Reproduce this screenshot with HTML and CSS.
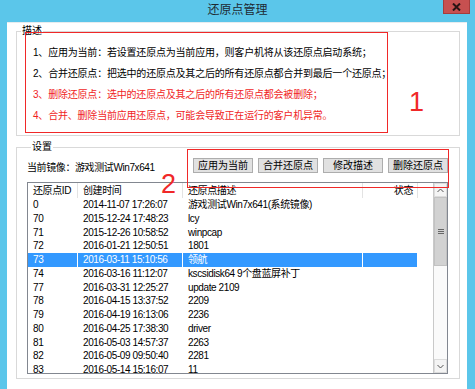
FILE: index.html
```html
<!DOCTYPE html>
<html lang="zh-CN">
<head>
    <meta charset="UTF-8">
    <meta name="viewport" content="width=device-width, initial-scale=1.0">
    <title>还原点管理</title>
    <link rel="stylesheet" href="styles.css">
</head>
<body>
    <div class="window">
        <div class="titlebar">
            还原点管理
            <span class="close">
                <svg width="9" height="8" viewBox="0 0 9 8"><path d="M1 0.5 L8 7.5 M8 0.5 L1 7.5" stroke="#2a1414" stroke-width="2"/></svg>
            </span>
        </div>
        <div class="client">
            <fieldset class="group">
                <legend>描述</legend>
                <div class="desc">
                    <p>1、应用为当前：若设置还原点为当前应用，则客户机将从该还原点启动系统；</p>
                    <p>2、合并还原点：把选中的还原点及其之后的所有还原点都合并到最后一个还原点；</p>
                    <p class="warn">3、删除还原点：选中的还原点及其之后的所有还原点都会被删除；</p>
                    <p class="warn">4、合并、删除当前应用还原点，可能会导致正在运行的客户机异常。</p>
                </div>
            </fieldset>
            <fieldset class="group settings">
                <legend>设置</legend>
                <div class="toolbar">
                    <span class="current">当前镜像：游戏测试Win7x641</span>
                    <div class="buttons">
                        <button>应用为当前</button>
                        <button>合并还原点</button>
                        <button>修改描述</button>
                        <button>删除还原点</button>
                    </div>
                </div>
                <div class="list">
                    <div class="rows">
                        <div class="row head">
                            <span>还原点ID</span><span>创建时间</span><span>还原点描述</span><span class="right">状态</span>
                        </div>
                        <div class="row"><span>0</span><span>2014-11-07 17:26:07</span><span>游戏测试Win7x641(系统镜像)</span><span></span></div>
                        <div class="row"><span>70</span><span>2015-12-24 17:48:23</span><span>lcy</span><span></span></div>
                        <div class="row"><span>71</span><span>2015-12-26 10:58:52</span><span>winpcap</span><span></span></div>
                        <div class="row"><span>72</span><span>2016-01-21 12:50:51</span><span>1801</span><span></span></div>
                        <div class="row sel"><span>73</span><span>2016-03-11 15:10:56</span><span>领航</span><span></span></div>
                        <div class="row"><span>74</span><span>2016-03-16 11:12:07</span><span>kscsidisk64 9个盘蓝屏补丁</span><span></span></div>
                        <div class="row"><span>77</span><span>2016-03-31 12:25:27</span><span>update 2109</span><span></span></div>
                        <div class="row"><span>78</span><span>2016-04-15 13:37:52</span><span>2209</span><span></span></div>
                        <div class="row"><span>79</span><span>2016-04-19 16:13:06</span><span>2236</span><span></span></div>
                        <div class="row"><span>80</span><span>2016-04-25 17:38:30</span><span>driver</span><span></span></div>
                        <div class="row"><span>81</span><span>2016-05-03 14:57:37</span><span>2263</span><span></span></div>
                        <div class="row"><span>82</span><span>2016-05-09 09:50:40</span><span>2281</span><span></span></div>
                        <div class="row"><span>83</span><span>2016-05-14 15:16:07</span><span>11</span><span></span></div>
                    </div>
                    <div class="scrollbar">
                        <div class="arrow">
                            <svg width="7" height="5" viewBox="0 0 7 5"><path d="M0.5 4 L3.5 1 L6.5 4" fill="none" stroke="#555"/></svg>
                        </div>
                        <div class="thumb">
                            <svg width="6" height="6" viewBox="0 0 6 6"><path d="M0 0.5 H6 M0 2.5 H6 M0 4.5 H6" stroke="#666"/></svg>
                        </div>
                        <div class="track"></div>
                        <div class="arrow">
                            <svg width="7" height="5" viewBox="0 0 7 5"><path d="M0.5 1 L3.5 4 L6.5 1" fill="none" stroke="#555"/></svg>
                        </div>
                    </div>
                </div>
            </fieldset>
        </div>
        <div class="mark box1"></div>
        <div class="mark num num1">1</div>
        <div class="mark box2"></div>
        <div class="mark num num2">2</div>
    </div>
</body>
</html>
```

FILE: styles.css
```css
* { margin: 0; padding: 0; box-sizing: border-box; }
body { background-color: #5bc6ea; font-family: "Liberation Sans", "Noto Sans CJK SC", sans-serif; font-size: 10px; color: #000; }
.window { position: relative; width: 475px; height: 389px; overflow: hidden; background-color: #5bc6ea; }

.titlebar { position: relative; height: 22px; line-height: 21px; text-align: center; font-size: 12px; color: #1e2a33; }
.close { position: absolute; top: 0; right: 5px; width: 27px; height: 14px; background-color: #c75050; border: 1px solid #a53c3c; border-top: none; display: flex; align-items: center; justify-content: center; }

.client { height: 367px; margin-left: 7px; width: 460px; background: #fff; border-top: 1px solid #e6ecef; padding: 2px 7px 0 9px; }

.group { border: 1px solid #d9d9d9; min-width: 0; }
.group legend { margin-left: 4px; padding: 0 1px; font-size: 10px; line-height: 12px; }
.desc { padding: 4.5px 16px 9.5px 16px; letter-spacing: -0.2px; }
.desc p { line-height: 21px; white-space: nowrap; }
.desc .warn { color: #f01e1e; }

.settings { margin-top: 5px; padding: 5px 11px 4px 10px; }
.toolbar { display: flex; justify-content: space-between; align-items: flex-end; }
.current { line-height: 11px; letter-spacing: -0.4px; }
.buttons { display: flex; gap: 5px; }
.buttons button { width: 60px; height: 15px; font: inherit; line-height: 13px; background-color: #e1e1e1; border: 1px solid #adadad; color: #000; }

.list { margin-top: 9px; height: 192px; border: 1px solid #828790; display: flex; overflow: hidden; }
.rows { flex: 1; letter-spacing: -0.4px; }
.row { display: grid; grid-template-columns: 50px 105px 180px 55px; height: 13.75px; line-height: 13.75px; white-space: nowrap; }
.row span { padding: 0 5px; overflow: hidden; }
.row .right { text-align: right; }
.head { height: 15px; line-height: 16px; }
.head span { box-shadow: inset -1px 0 #e3e3e3; }
.sel span { background-color: #3399ff; color: #fff; box-shadow: inset -1px 0 #fff; }

.scrollbar { width: 14px; display: flex; flex-direction: column; border-left: 1px solid #c9c9c9; background: #fafafa; }
.arrow { height: 14px; display: flex; align-items: center; justify-content: center; border: 1px solid #dcdcdc; background: #f4f4f4; }
.thumb { height: 69px; background-color: #d2d2d2; border: 1px solid #c2c2c2; display: flex; align-items: center; justify-content: center; }
.track { flex: 1; }

.mark { position: absolute; }
.box1 { left: 25px; top: 32px; width: 363px; height: 101px; border: 1px solid #f02828; }
.box2 { left: 187px; top: 149px; width: 262px; height: 39px; border: 1px solid #f02828; }
.num { font-size: 27px; line-height: 27px; color: #f02828; }
.num1 { left: 409px; top: 89px; }
.num2 { left: 161px; top: 171px; }
```
